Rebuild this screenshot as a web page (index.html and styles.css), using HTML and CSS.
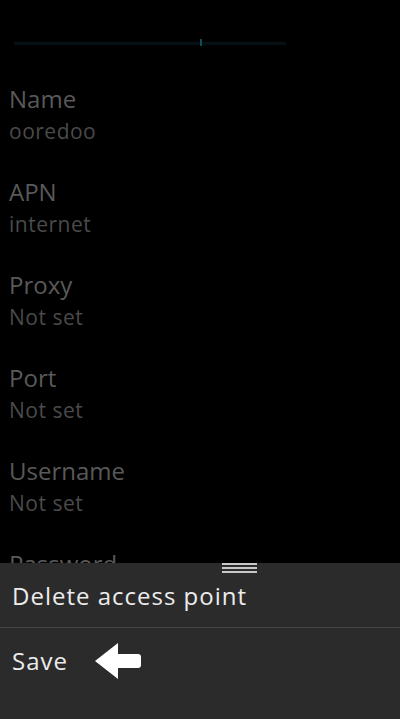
FILE: index.html
```html
<!DOCTYPE html>
<html>
<head>
<meta charset="utf-8">
<link rel="stylesheet" href="styles.css">
</head>
<body>
<div class="screen">
  <div class="header">
    <div class="tabline"><span class="tabmark"></span></div>
  </div>
  <ul class="fields">
    <li class="field"><div class="label">Name</div><div class="value">ooredoo</div></li>
    <li class="field"><div class="label">APN</div><div class="value">internet</div></li>
    <li class="field"><div class="label">Proxy</div><div class="value">Not set</div></li>
    <li class="field"><div class="label">Port</div><div class="value">Not set</div></li>
    <li class="field"><div class="label">Username</div><div class="value">Not set</div></li>
    <li class="field"><div class="label">Password</div><div class="value">Not set</div></li>
  </ul>
  <div class="sheet">
    <div class="handle"><span></span><span></span><span></span></div>
    <div class="menu-item first">Delete access point</div>
    <div class="menu-item">Save
      <svg class="arrow" width="48" height="38" viewBox="0 0 48 38">
        <path d="M0 18 L23 0 L23 11 L43 11 Q46 11 46 14 L46 22 Q46 25 43 25 L23 25 L23 36 Z" fill="#ffffff"/>
      </svg>
    </div>
  </div>
</div>
</body>
</html>
```
FILE: styles.css
```css
html, body {
  margin: 0;
  padding: 0;
  background: #000;
}
.screen {
  position: relative;
  width: 400px;
  height: 719px;
  overflow: hidden;
  background: #000;
  font-family: "Open Sans", "Noto Sans", sans-serif;
}
.header {
  height: 84px;
  padding-top: 42px;
  box-sizing: border-box;
}
.tabline {
  position: relative;
  margin-left: 14px;
  width: 272px;
  height: 3px;
  background: #041013;
}
.tabmark {
  position: absolute;
  left: 186px;
  top: -3px;
  width: 2px;
  height: 7px;
  background: #134a57;
}
.fields {
  list-style: none;
  margin: 0;
  padding: 0 0 0 9px;
}
.field {
  height: 93px;
}
.label {
  font-size: 24px;
  line-height: 30px;
  color: #595959;
}
.value {
  margin-top: 2px;
  font-size: 21px;
  line-height: 30px;
  letter-spacing: 0.5px;
  color: #4a4a4a;
}
.sheet {
  position: absolute;
  left: 0;
  top: 563px;
  width: 400px;
  height: 156px;
  background: #2b2b2b;
}
.handle {
  position: absolute;
  left: 222px;
  top: 0;
  width: 35px;
  display: flex;
  flex-direction: column;
  gap: 2px;
}
.handle span {
  display: block;
  height: 2px;
  background: #c8c8c8;
}
.menu-item {
  display: flex;
  align-items: center;
  height: 64px;
  padding-left: 12px;
  font-size: 24px;
  letter-spacing: 1px;
  color: #ececec;
}
.menu-item.first {
  border-bottom: 1px solid #454545;
}
.arrow {
  margin-left: 27px;
  margin-top: 4px;
}
```
